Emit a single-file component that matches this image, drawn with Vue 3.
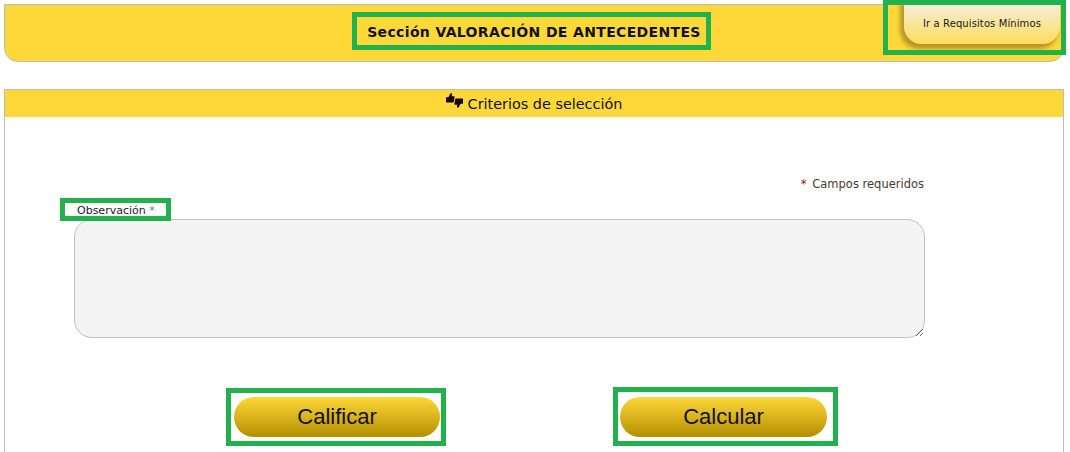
<script setup>
const buttons = ['Calificar', 'Calcular']
</script>

<template>
  <div class="page">
    <header class="banner">
      <h1 class="banner-title">Sección VALORACIÓN DE ANTECEDENTES</h1>
      <a class="req-link">Ir a Requisitos Mínimos</a>
    </header>

    <section class="panel">
      <div class="panel-head">
        <svg class="thumbs" viewBox="0 0 17 15" width="17" height="15">
          <path d="M0 4.2h2.4L4.4.4C5.4 0 6.2.5 6.1 1.4L5.8 3.2h1.9c.7 0 1 .5.9 1.1L7.8 8.8c-.1.5-.5.8-1 .8H0z" fill="#140600" />
          <path d="M17 10.8h-2.4l-2 3.8c-1 .4-1.8-.1-1.7-1l.3-1.8H9.3c-.7 0-1-.5-.9-1.1l.8-4.5c.1-.5.5-.8 1-.8H17z" fill="#140600" />
        </svg>
        <span>Criterios de selección</span>
      </div>

      <div class="panel-body">
        <p class="required"><span class="star">*</span> Campos requeridos</p>
        <label class="field-label">Observación <span class="star-soft">*</span></label>
        <textarea class="obs"></textarea>
        <div class="actions">
          <button v-for="b in buttons" :key="b" class="gold-btn">{{ b }}</button>
        </div>
      </div>
    </section>

    <!-- green highlight boxes drawn over the capture -->
    <div class="mark mark-title"></div>
    <div class="mark mark-req"></div>
    <div class="mark mark-label"></div>
    <div class="mark mark-calificar"></div>
    <div class="mark mark-calcular"></div>
  </div>
</template>

<style>
html, body { margin: 0; overflow: hidden; background: #fff; }
</style>

<style scoped>
.page { position: relative; width: 1070px; height: 452px; overflow: hidden; padding: 4px 6px 0 4px; box-sizing: border-box; font-family: "DejaVu Sans", Verdana, sans-serif; color: #111; }

.banner { position: relative; height: 58px; box-sizing: border-box; background: #fed839; border: 1px solid #bcbcbc; border-radius: 0 0 14px 14px; display: flex; align-items: center; justify-content: center; padding-bottom: 3px; }
.banner-title { margin: 0; font-size: 14px; font-weight: 700; letter-spacing: 0.35px; color: #111; }
.req-link { position: absolute; top: -5px; right: 3px; width: 156px; height: 44px; box-sizing: border-box; padding-top: 3px; display: flex; align-items: center; justify-content: center; font-size: 10px; letter-spacing: 0.1px; color: #1a1a1a; background: linear-gradient(#f5f0e4, #fedc5c); border-radius: 0 0 18px 18px; box-shadow: -3px 4px 4px 1px #b8962a; }

.panel { margin-top: 27px; border: 1px solid #bcbcbc; border-bottom: none; height: 380px; box-sizing: border-box; }
.panel-head { height: 27px; background: #fed839; display: flex; align-items: center; justify-content: center; gap: 5px; font-size: 14.4px; box-sizing: border-box; padding-top: 1px; }
.thumbs { margin-top: -7px; }

.panel-body { display: flex; flex-direction: column; padding: 59px 139px 0 69px; }
.required { margin: 0; text-align: right; font-size: 11.5px; color: #4a3a30; line-height: 16px; }
.star { color: #8a1a1a; margin-right: 2px; }
.field-label { margin-top: 11px; padding-left: 3px; font-size: 11px; line-height: 16px; color: #1a1a2a; }
.star-soft { color: #777; }
.obs { display: block; width: 851px; height: 119px; margin-top: 0; box-sizing: border-box; background: #f4f4f5; border: 1px solid #bcbfcc; border-radius: 18px; padding: 8px; outline: none; }
.actions { display: flex; gap: 180px; margin-top: 59px; padding-left: 160px; }
.gold-btn { width: 206px; height: 40px; border: none; border-radius: 20px; background: linear-gradient(#fed839, #b38f00); font-family: "Liberation Sans", Arial, sans-serif; font-size: 22px; color: #111; padding: 0; }
.gold-btn:last-child { width: 207px; }

.mark { position: absolute; box-sizing: border-box; border: 5px solid #22b14c; pointer-events: none; }
.mark-title { left: 352px; top: 12px; width: 359px; height: 38px; }
.mark-req { left: 883px; top: 0; width: 183px; height: 55px; }
.mark-label { left: 60px; top: 198px; width: 111px; height: 23px; }
.mark-calificar { left: 226px; top: 388px; width: 220px; height: 58px; }
.mark-calcular { left: 613px; top: 387px; width: 225px; height: 59px; }
</style>
